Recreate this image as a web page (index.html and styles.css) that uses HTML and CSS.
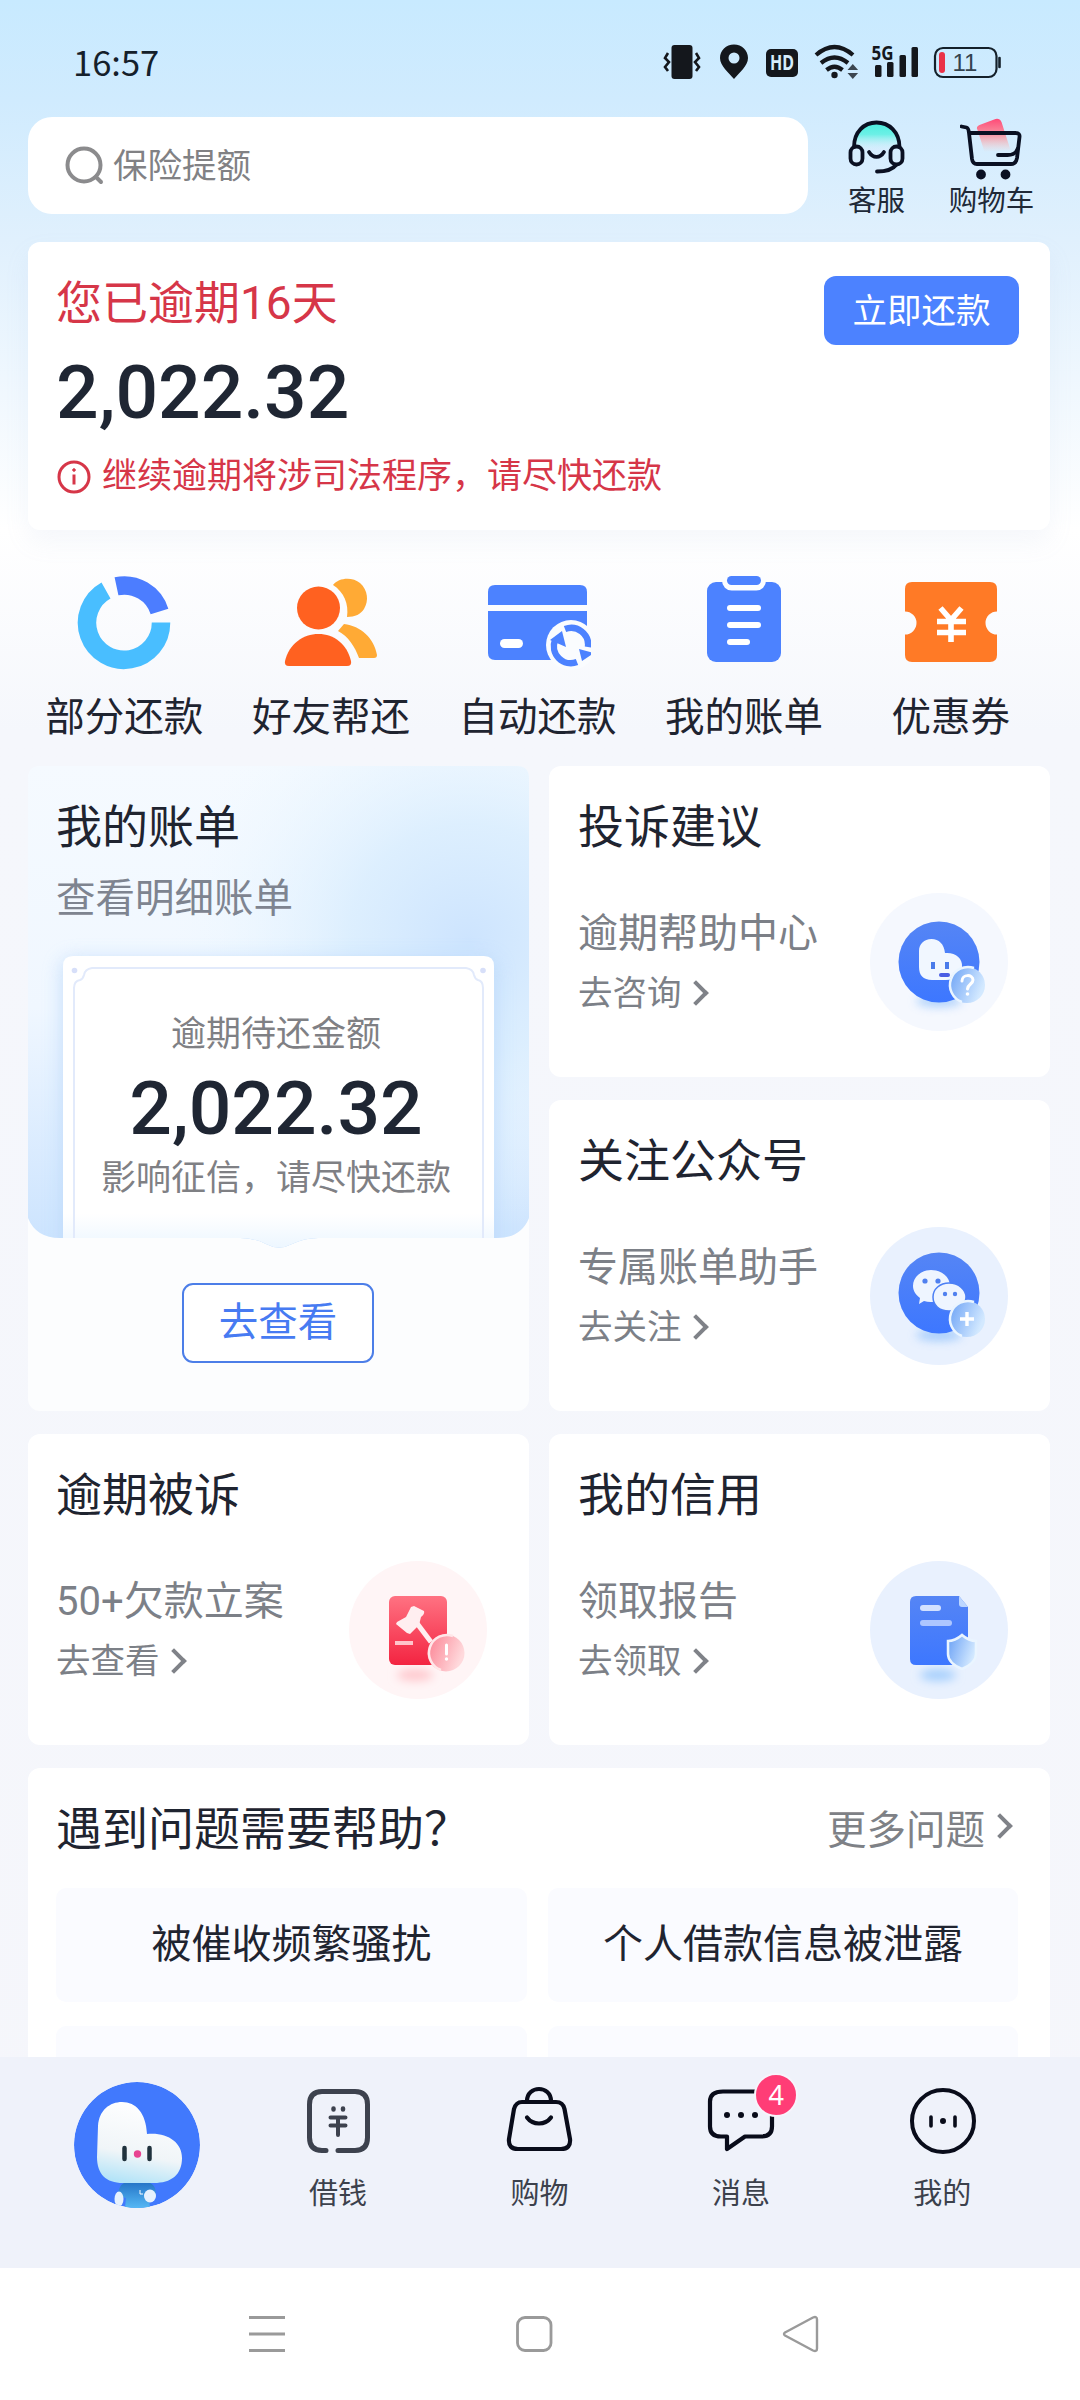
FILE: index.html
```html
<!DOCTYPE html>
<html lang="zh-CN">
<head>
<meta charset="utf-8">
<title>还款</title>
<link rel="stylesheet" href="styles.css">
</head>
<body>
<div class="screen">
  <header class="status">
    <span class="clock">16:57</span>
    <svg class="status-icons" width="342" height="48" viewBox="660 34 342 48">
      <rect x="671.500" y="45" width="21" height="34" rx="3" fill="#14171c"/>
      <path d="M668 53l-3 5 4 4-4 5 3 4M696 53l3 5-4 4 4 5-3 4" fill="none" stroke="#14171c" stroke-width="2.600"/>
      <path d="M734 44.500c-8 0-14 6-14 13.500 0 8 9 15 14 21 5-6 14-13 14-21 0-7.500-6-13.500-14-13.500z" fill="#14171c"/>
      <circle cx="734" cy="58" r="5.500" fill="#cdeafd"/>
      <rect x="766" y="49" width="32" height="28" rx="5" fill="#14171c"/>
      <text x="782" y="70" class="hd" textLength="24" lengthAdjust="spacingAndGlyphs">HD</text>
      <g fill="none" stroke="#14171c" stroke-width="4.200">
        <path d="M816 55q18.500-16 37 0"/><path d="M821 63q13.500-11 27 0"/><path d="M826.500 70q8-6.500 16 0"/>
      </g>
      <circle cx="834.500" cy="75" r="3.200" fill="#14171c"/>
      <path d="M847.500 70l5.300-6 5.300 6zM847.500 73l5.300 6 5.300-6z" fill="#3c4650"/>
      <text x="871.500" y="60" class="fiveg" textLength="22" lengthAdjust="spacingAndGlyphs">5G</text>
      <g fill="#14171c"><rect x="875" y="65" width="6.500" height="12" rx="1.500"/><rect x="887" y="62" width="6.500" height="15" rx="1.500"/><rect x="899.500" y="55" width="6.500" height="22" rx="1.500"/><rect x="911.500" y="47" width="6.500" height="30" rx="1.500"/></g>
      <rect x="935" y="48" width="61.500" height="29" rx="8" fill="none" stroke="#14202a" stroke-width="2.200"/>
      <rect x="939" y="52" width="6" height="21" rx="3" fill="#ea3147"/>
      <text x="965" y="71" class="pct">11</text>
      <path d="M999.500 58v9" stroke="#14202a" stroke-width="2.600" stroke-linecap="round"/>
    </svg>
  </header>

  <div class="topbar">
    <div class="search">
      <svg width="42" height="42" viewBox="0 0 42 42" fill="none" stroke="#8b8b8d" stroke-width="4" stroke-linecap="round"><circle cx="20" cy="20" r="16.500"/><path d="M32 32l5 5"/></svg>
      <span>保险提额</span>
    </div>
    <div class="top-action">
      <svg width="64" height="64" viewBox="845 116 64 64" fill="none" stroke="#0a1022" stroke-width="3.800" stroke-linecap="round">
        <defs><linearGradient id="mint" x1="0" y1="0" x2="0" y2="1"><stop offset="0" stop-color="#4eeedf"/><stop offset=".4" stop-color="#6cf0e6"/><stop offset="1" stop-color="#cff1fb" stop-opacity="0"/></linearGradient></defs>
        <path d="M854 146c0-15 10-23 22.500-23s23 8 23 23q-23 6-45.500 0z" fill="url(#mint)" stroke="none"/>
        <path d="M854 146c0-15 10-24.500 22.500-24.500s23 9.500 23 24.500"/>
        <rect x="850.500" y="145.500" width="12" height="18" rx="6"/><rect x="890.500" y="145.500" width="12" height="18" rx="6"/>
        <path d="M869 151c4 6.500 11 6.500 15 0M896 164c-3 4-9 6.500-19 6.500"/>
      </svg>
      <span>客服</span>
    </div>
    <div class="top-action">
      <svg width="64" height="64" viewBox="959.500 116 64 64" fill="none" stroke="#0a1022" stroke-width="3.800" stroke-linecap="round" stroke-linejoin="round">
        <defs><linearGradient id="rose" x1="0" y1="0" x2="0" y2="1"><stop offset="0" stop-color="#ff4a77"/><stop offset=".45" stop-color="#f78f9f"/><stop offset="1" stop-color="#ffc4b8" stop-opacity="0"/></linearGradient></defs>
        <path d="M977 129q-2-3 2-5l16-6q4-1 6 3l9 28-26 2z" fill="url(#rose)" stroke="none"/>
        <path d="M961 125.500l5 1q2 .5 2.500 5.500l3 26q.7 5 5 5h34q5 0 6-6l2.500-21q.6-4-4-4H970"/>
        <path d="M1017 148q-2 6-10 6h-9.500"/>
        <circle cx="980.500" cy="173.500" r="3" fill="#0a1022"/><circle cx="1005" cy="173.500" r="3" fill="#0a1022"/>
      </svg>
      <span>购物车</span>
    </div>
  </div>

  <section class="due card">
    <div class="due-text">
      <h1>您已逾期16天</h1>
      <strong class="amount">2,022.32</strong>
      <p><svg width="36" height="36" viewBox="0 0 36 36" fill="none" stroke="#d63648"><circle cx="18" cy="18" r="15" stroke-width="3"/><path d="M18 15.500v10" stroke-width="3"/><circle cx="18" cy="11" r="1.300" fill="#d63648" stroke-width="1"/></svg>继续逾期将涉司法程序，请尽快还款</p>
    </div>
    <button class="pay">立即还款</button>
  </section>

  <nav class="shortcuts">
    <a><svg viewBox="0 0 108 96"><g fill="none" stroke-width="18.500"><path d="M91 48.500A37 37 0 1 1 36 16.500" stroke="#49beff"/><path d="M46.500 12.300A37 37 0 0 1 89.500 37.500" stroke="#4c7dff"/></g></svg>部分还款</a>
    <a><svg viewBox="0 0 108 96"><g fill="#ffaa35"><path d="M56 11c6-8 20-8 27-2 8 7 9 18 4 26-3 5-9 8-17 8 2-13-3-25-14-32z"/><path d="M61 57l6-7c17 2 30 14 33 31q0 3-3 3H82C78 73 71 62 61 57z"/></g><circle cx="41.500" cy="34" r="21.500" fill="#ff6120"/><path d="M8 87c4-17 18-27 33.500-27S70 70 74 87q1 5-4 5H12q-5 0-4-5z" fill="#ff6120"/></svg>好友帮还</a>
    <a><svg viewBox="0 0 108 96"><path d="M5 18q0-7 7-7h85q7 0 7 7v13H5zM5 37h99v47q0 2-7 2H12q-7 0-7-7z" fill="#4c82ff"/><rect x="17" y="65" width="23" height="9" rx="4.500" fill="#fff"/><circle cx="88" cy="71" r="25" fill="#fafcfe"/><g fill="none" stroke="#4c82ff" stroke-width="6.500"><path d="M82 55a17 17 0 0 1 23 18"/><path d="M94 88A17 17 0 0 1 72 66"/></g><path d="M67 66l12-9 4 16zM96 75l15 4-12 8z" fill="#4c82ff"/></svg>自动还款</a>
    <a><svg viewBox="0 0 108 96"><rect x="17" y="8" width="74" height="80" rx="9" fill="#4c82ff"/><rect x="32" y="-3" width="44" height="19.500" rx="9.700" fill="#fcfdff"/><rect x="37" y="2" width="34" height="9" rx="4.500" fill="#4c82ff"/><g fill="#fff"><rect x="37" y="31" width="34" height="6" rx="3"/><rect x="37" y="48" width="34" height="6" rx="3"/><rect x="37" y="65" width="23" height="6" rx="3"/></g></svg>我的账单</a>
    <a><svg viewBox="0 0 108 96"><path d="M15 8h78q7 0 7 7v22.500a11.500 11.500 0 0 0 0 23V81q0 7-7 7H15q-7 0-7-7V60.500a11.500 11.500 0 0 0 0-23V15q0-7 7-7z" fill="#ff7a26"/><path d="M43.500 34l10.500 12 10.500-12M40 47.500h29M40 58.500h29M54 46v22" fill="none" stroke="#fff" stroke-width="5.600"/></svg>优惠券</a>
  </nav>

  <main class="grid">
    <section class="bill card">
      <svg class="bill-art" width="501" height="483" viewBox="0 0 501 483">
        <defs>
          <linearGradient id="sky" x1="0" y1="0" x2="0" y2="1"><stop offset="0" stop-color="#f5faff"/><stop offset=".5" stop-color="#f0f7ff"/><stop offset="1" stop-color="#cbe3fe"/></linearGradient>
          <radialGradient id="glow" cx=".88" cy=".36" r=".6" gradientTransform="translate(0 0)"><stop offset="0" stop-color="#cde4fe"/><stop offset=".4" stop-color="#d9edfe" stop-opacity=".85"/><stop offset="1" stop-color="#eff9ff" stop-opacity="0"/></radialGradient>
          <linearGradient id="fade" x1="0" y1="0" x2="0" y2="1"><stop offset="0" stop-color="#fff"/><stop offset=".88" stop-color="#fff"/><stop offset="1" stop-color="#ecf6ff"/></linearGradient>
          <filter id="soft" x="-20%" y="-20%" width="140%" height="140%"><feGaussianBlur stdDeviation="9"/></filter>
          <clipPath id="pane"><path d="M0 12Q0 0 12 0h477q12 0 12 12v440q-8 20-32 20H290q-14 0-26 6-13 7-26 0-12-6-26-6H32Q8 472 0 452z"/></clipPath>
        </defs>
        <g clip-path="url(#pane)">
          <rect width="501" height="483" fill="url(#sky)"/><rect width="501" height="483" fill="url(#glow)"/>
          <rect x="33" y="192" width="436" height="310" rx="12" fill="#b9d8fa" opacity=".7" filter="url(#soft)"/>
          <path d="M35 200q0-10 10-10h411q10 0 10 10v283H35z" fill="url(#fade)"/>
          <path d="M46 472V222q0-7 6-8 3-1 4-5 1-6 8-7h374q7 1 8 7 1 4 4 5 5 1 5 8v250" fill="none" stroke="#e2eafb" stroke-width="2"/>
          <circle cx="46.500" cy="204.500" r="2.800" fill="#d7dff9"/><circle cx="455" cy="204.500" r="2.800" fill="#d7dff9"/>
        </g>
      </svg>
      <div class="bill-body">
        <h2>我的账单</h2>
        <p class="sub">查看明细账单</p>
        <p class="small">逾期待还金额</p>
        <strong class="amount">2,022.32</strong>
        <p class="small note">影响征信，请尽快还款</p>
        <button class="view">去查看</button>
      </div>
    </section>

    <section class="tile card">
      <h2>投诉建议</h2>
      <div class="tile-row">
        <div><p>逾期帮助中心</p><a>去咨询<i class="chev"></i></a></div>
        <svg class="orb" viewBox="0 0 138 138">
          <defs>
            <linearGradient id="blue" x1="0" y1="0" x2="0" y2="1"><stop offset="0" stop-color="#5585f5"/><stop offset="1" stop-color="#3d77ff"/></linearGradient>
            <linearGradient id="ball" x1="0" y1="0" x2="1" y2=".4"><stop offset="0" stop-color="#69a0f5"/><stop offset="1" stop-color="#d3e9ff"/></linearGradient>
            <filter id="blur" x="-50%" y="-80%" width="200%" height="260%"><feGaussianBlur stdDeviation="5"/></filter>
          </defs>
          <circle cx="69" cy="69" r="69" fill="#f5f8fe"/><ellipse cx="69" cy="108" rx="23" ry="6" fill="#9cc7fb" opacity=".8" filter="url(#blur)"/>
          <circle cx="69" cy="69" r="40.500" fill="url(#blue)"/>
          <path d="M49 58c0-7 5-12 12.500-12S74 51 75 60c10-1 18 5 17 14-1 8-7 13-16 13H62c-9 0-13-5-13-13z" fill="#f1f7ff"/>
          <path d="M63 69v7M77 69v7" stroke="#4a7bea" stroke-width="4"/><path d="M71 82h7" stroke="#4a5de4" stroke-width="4" stroke-linecap="round"/>
          <circle cx="97" cy="92" r="18" fill="url(#ball)"/><path d="M92 109A18 18 0 1 1 104 75" fill="none" stroke="#eaf5ff" stroke-width="2.500"/>
          <path d="M92 88c0-7 11-7 11-1 0 4-5 4-5.500 9" fill="none" stroke="#fff" stroke-width="3" stroke-linecap="round"/><circle cx="97.500" cy="101" r="1.800" fill="#fff"/>
        </svg>
      </div>
    </section>

    <section class="tile card">
      <h2>关注公众号</h2>
      <div class="tile-row">
        <div><p>专属账单助手</p><a>去关注<i class="chev"></i></a></div>
        <svg class="orb" viewBox="0 0 138 138">
          <circle cx="69" cy="69" r="69" fill="#e9f1fe"/><ellipse cx="69" cy="108" rx="23" ry="6" fill="#96c4fb" opacity=".8" filter="url(#blur)"/>
          <circle cx="69" cy="66" r="40.500" fill="url(#blue)"/>
          <path d="M61 43c11 0 19 7 19 16s-8 16-19 16q-4 0-7-1l-5 3 1-6c-4-3-7-7-7-12 0-9 8-16 18-16z" fill="#eef5ff"/>
          <path d="M79 56c10 0 17 7 17 14s-7 14-17 14-16-6-16-14 7-14 16-14z" fill="#eef5ff" stroke="#4b7ff5" stroke-width="1.500"/>
          <g fill="#4f80ef"><circle cx="55" cy="54" r="2.600"/><circle cx="68" cy="54" r="2.600"/><circle cx="75" cy="67" r="2.200"/><circle cx="85" cy="67" r="2.200"/></g>
          <circle cx="97" cy="92" r="18" fill="url(#ball)"/><path d="M92 109A18 18 0 1 1 104 75" fill="none" stroke="#eaf5ff" stroke-width="2.500"/>
          <path d="M90 92h14M97 85v14" stroke="#fff" stroke-width="3.400"/>
        </svg>
      </div>
    </section>

    <section class="tile card">
      <h2>逾期被诉</h2>
      <div class="tile-row">
        <div><p>50+欠款立案</p><a>去查看<i class="chev"></i></a></div>
        <svg class="orb" viewBox="0 0 138 138">
          <defs><linearGradient id="red" x1="0" y1="0" x2="0" y2="1"><stop offset="0" stop-color="#ff7282"/><stop offset="1" stop-color="#f32441"/></linearGradient><linearGradient id="pink" x1="0" y1="0" x2="1" y2=".4"><stop offset="0" stop-color="#fb7f90"/><stop offset="1" stop-color="#ffd9dc"/></linearGradient></defs>
          <circle cx="69" cy="69" r="69" fill="#fff5f6"/><ellipse cx="66" cy="114" rx="18" ry="6" fill="#ffc8cd" filter="url(#blur)"/>
          <rect x="40" y="35" width="58" height="69" rx="6" fill="url(#red)"/>
          <path d="M65 45l10 5q1 3-3 6l-2 8-9 9-3-1-11-9 1-2 9-5 5-10z" fill="#ffeef0"/><path d="M67 61l15 20" stroke="#ffeef0" stroke-width="5"/><path d="M46 82h18" stroke="#ffc4cb" stroke-width="4"/>
          <circle cx="97" cy="92" r="18.500" fill="url(#pink)"/><path d="M92 109A18 18 0 1 1 104 75" fill="none" stroke="#ffe7e9" stroke-width="2.500"/>
          <path d="M97.500 84v9" stroke="#fff" stroke-width="3" stroke-linecap="round"/><circle cx="97.500" cy="98" r="1.700" fill="#fff"/>
        </svg>
      </div>
    </section>

    <section class="tile card">
      <h2>我的信用</h2>
      <div class="tile-row">
        <div><p>领取报告</p><a>去领取<i class="chev"></i></a></div>
        <svg class="orb" viewBox="0 0 138 138">
          <circle cx="69" cy="69" r="69" fill="#e9f1fe"/><ellipse cx="68" cy="114" rx="18" ry="6" fill="#a5cffd" filter="url(#blur)"/>
          <path d="M46 35h43l9 11v52q0 6-6 6H46q-6 0-6-6V41q0-6 6-6z" fill="url(#blue)"/><path d="M89 35l9 11h-6q-3 0-3-3z" fill="#bdd7ff"/>
          <g stroke-linecap="round" stroke-width="6"><path d="M53 47h15" stroke="#d2e1ff"/><path d="M53 62h26" stroke="#adc6ff"/></g>
          <path d="M92 73q7 6 14 6v13q0 9-14 15-14-6-14-15V79q7 0 14-6z" transform="translate(0 1)" fill="url(#ball)" stroke="#eaf5ff" stroke-width="2.500"/>
        </svg>
      </div>
    </section>
  </main>

  <section class="help card">
    <div class="help-head"><h2>遇到问题需要帮助？</h2><a>更多问题<i class="chev"></i></a></div>
    <div class="questions"><span>被催收频繁骚扰</span><span>个人借款信息被泄露</span><span></span><span></span></div>
  </section>

  <nav class="tabs">
    <a class="home"><svg width="126" height="126" viewBox="0 0 126 126">
      <defs><clipPath id="disc"><circle cx="63" cy="63" r="63"/></clipPath><linearGradient id="head" x1=".6" y1="0" x2=".4" y2="1"><stop offset="0" stop-color="#fff"/><stop offset=".65" stop-color="#f0f5f8"/><stop offset="1" stop-color="#b4e4f8"/></linearGradient><linearGradient id="shirt" x1="0" y1="0" x2="0" y2="1"><stop offset="0" stop-color="#2676c8"/><stop offset="1" stop-color="#55b8f4"/></linearGradient></defs>
      <g clip-path="url(#disc)"><circle cx="63" cy="63" r="63" fill="#4179fd"/>
      <path d="M50 101h26c5 2 7 8 5 14l-6 1 1 10H51l1-10-8-2c0-6 2-11 6-13z" fill="url(#shirt)"/><ellipse cx="45" cy="117" rx="4.500" ry="7.500" fill="#e6f1fd"/><ellipse cx="76" cy="114" rx="6" ry="6.500" fill="#e6f1fd"/><path d="M66 108v4h3" fill="none" stroke="#fff" stroke-width="1"/>
      <path d="M24 44c1-16 12-24 24-24 14 0 24 11 25 32 20-2 35 8 35 24 0 17-11 25-28 25H49c-17 0-26-9-26-26z" fill="url(#head)"/></g>
      <path d="M50.500 66v11M75.500 66v11" stroke="#20323d" stroke-width="4.500" stroke-linecap="round"/><circle cx="63.500" cy="72" r="3.700" fill="#e84391"/>
    </svg></a>
    <a><svg viewBox="305 2083 66 74" fill="none" stroke="#3d424e" stroke-width="5" stroke-linecap="round"><path d="M326 2150.500h-4q-12.500 0-12.500-13v-33q0-13 12.500-13h33q12.500 0 12.500 13v33q0 13-12.500 13H338"/><path d="M330.500 2117.500h15M330.500 2125.500h15M338 2118v17" stroke-width="4"/><path d="M333.500 2108.500v1M343 2108.500v1" stroke-width="4.500"/></svg>借钱</a>
    <a><svg viewBox="505 2083 70 74" fill="none" stroke="#090c1a" stroke-width="4.200" stroke-linecap="round"><path d="M522 2102h34q7 0 8.500 7l5.500 30q1 10-9 10h-43q-10 0-9-10l5-30q2-7 8-7z"/><path d="M527 2101c0-16 24-16 24 0M527 2117.500c6 8 18 8 24 0"/></svg>购物</a>
    <a><svg viewBox="705 2083 72 74" fill="none" stroke="#090c1a" stroke-width="4.200" stroke-linejoin="round"><path d="M723 2091.500h36q13 0 13 13v22q0 10-11 10h-16l-18 12.500v-12.500h-6q-11 0-11-10v-25q0-10 13-10z"/><g fill="#090c1a" stroke="none"><circle cx="727" cy="2115" r="3"/><circle cx="741" cy="2115" r="3"/><circle cx="755" cy="2115" r="3"/></g></svg><b class="badge">4</b>消息</a>
    <a><svg viewBox="906 2083 72 74" fill="none" stroke="#090c1a" stroke-width="4" stroke-linecap="round"><circle cx="943" cy="2121" r="31"/><path d="M931 2117v9M955 2117v9" stroke-width="3.600"/><circle cx="943" cy="2121" r="2" fill="#090c1a" stroke-width="2"/></svg>我的</a>
  </nav>

  <footer class="system-nav">
    <svg width="40" height="40" viewBox="0 0 40 40" fill="none" stroke="#9a9a9a" stroke-width="3"><path d="M2 3.500h36M2 20h36M2 36.500h36"/></svg>
    <svg width="40" height="40" viewBox="-.5 0 40 40" fill="none" stroke="#9a9a9a" stroke-width="2.800"><rect x="3" y="3.500" width="33.500" height="33" rx="7.500"/></svg>
    <svg width="40" height="40" viewBox="0 0 40 40" fill="none" stroke="#9a9a9a" stroke-width="2.400" stroke-linejoin="round"><path d="M4 18.500L32 3.500q4-1.500 4 2v29q0 3.500-4 2L4 21.500q-2-1.500 0-3z"/></svg>
  </footer>
</div>
</body>
</html>
```
FILE: styles.css
```css
* { box-sizing: border-box; margin: 0; padding: 0; }
body { background: #f5f6fb; font-family: Roboto, "Noto Sans CJK SC", sans-serif; color: #1f2430; }
h1, h2 { font-size: 46px; line-height: 60px; font-weight: 400; }
svg { display: block; flex: none; }
button { font: inherit; display: block; }
.screen { width: 1080px; height: 2400px; overflow: hidden; display: flex; flex-direction: column; background: linear-gradient(#c8eaff 0, #d0ebfe 100px, #e0f0fd 240px, #fff 530px, #f5f7fc 730px, #f5f6fb 100%); }
.card { background: #fff; border-radius: 12px; }

.status { height: 117px; flex: none; display: flex; justify-content: space-between; padding: 34px 78px 0 73px; }
.clock { font: 34.500px/42px "Noto Sans CJK SC", sans-serif; color: #15202a; padding-top: 6px; }
.status-icons text { font-family: "Noto Sans", sans-serif; }
.status-icons .hd { font-size: 21px; font-weight: 700; fill: #d6edfb; text-anchor: middle; }
.status-icons .fiveg { font-size: 20px; font-weight: 700; fill: #14171c; }
.status-icons .pct { font: 24px "Liberation Sans", sans-serif; fill: #33424e; text-anchor: middle; }

.topbar { height: 125px; flex: none; display: flex; padding-left: 28px; }
.search { width: 780px; height: 97px; border-radius: 24px; background: #fff; display: flex; align-items: center; gap: 7px; padding: 0 0 6px 36px; color: #818184; font-size: 34.5px; }
.search svg { margin-top: 7px; }
.top-action { width: 115px; display: flex; flex-direction: column; align-items: center; font-size: 28.5px; line-height: 41px; color: #202938; white-space: nowrap; }
.top-action:nth-child(2) { margin-left: 11px; }

.due { flex: none; height: 288px; margin: 0 30px 0 28px; padding: 28px 31px 0 28px; display: flex; justify-content: space-between; box-shadow: 0 12px 24px rgba(160, 180, 220, .1); }
.due h1 { line-height: 66px; color: #d63648; }
.amount { display: block; font: 500 75px/88px Roboto, sans-serif; color: #1f2633; }
.due .amount { margin-top: 12px; }
.due p { display: flex; align-items: center; gap: 10px; margin-top: 17px; font-size: 35px; line-height: 48px; color: #d63648; }
.pay { width: 195px; height: 69px; margin-top: 6px; border: 0; border-radius: 12px; background: #4c82ff; color: #fff; font-size: 34.5px; line-height: 64px; }

.shortcuts { flex: none; height: 236px; display: flex; padding: 44px 26px 0 21px; }
.shortcuts a { flex: 1; display: flex; flex-direction: column; align-items: center; font-size: 39.5px; line-height: 58px; gap: 19px; color: #1f2430; }
.shortcuts svg { width: 108px; height: 96px; }

.grid { flex: none; display: grid; grid-template-columns: 501px 501px; grid-template-rows: repeat(3, 311px); gap: 23px 20px; margin: 0 30px 0 28px; }
.bill { grid-row: span 2; position: relative; background: #fcfdfe; }
.bill-art { position: absolute; left: 0; top: 0; }
.bill-body { position: relative; padding: 31px 0 0 28px; }
.sub { font-size: 39.500px; line-height: 56px; margin-top: 14px; color: #7e8490; }
.small { font-size: 35px; line-height: 50px; margin-top: 83px; color: #7f8084; text-align: center; padding-right: 33px; }
.bill .amount { text-align: center; padding-right: 33px; margin-top: 4px; }
.note { margin-top: 2px; }
.view { width: 192px; height: 80px; border: 2px solid #4c7ee8; border-radius: 11px; margin: 79px 0 0 126px; background: #fff; color: #477bf2; font-size: 39.500px; line-height: 74px; }

.tile { padding: 31px 42px 0 29px; }
.tile-row { display: flex; justify-content: space-between; margin-top: 35px; }
.tile p { font-size: 40px; line-height: 58px; margin-top: 13px; color: #7c8087; white-space: nowrap; }
.tile a { display: flex; align-items: center; gap: 9px; font-size: 34.500px; line-height: 50px; margin-top: 5px; color: #7c8087; }
.orb { width: 138px; height: 138px; margin-top: 1px; }
.bill ~ .tile:nth-child(4) { padding-left: 28px; }
.chev { width: 18px; height: 18px; border: solid #7f8288; border-width: 4px 4px 0 0; transform: translateX(-4px) rotate(45deg); }

.help { flex: 1; min-height: 0; margin: 23px 30px 0 28px; padding: 31px 31px 0 28px; overflow: hidden; border-radius: 12px 12px 0 0; }
.help-head { display: flex; justify-content: space-between; align-items: center; height: 60px; }
.help-head a { display: flex; align-items: center; gap: 10px; font-size: 39.500px; color: #7e8186; padding: 0 6px 6px 0; }
.questions { display: grid; grid-template-columns: 471px 470px; grid-auto-rows: 114px; gap: 24px 21px; margin-top: 29px; }
.questions span { border-radius: 10px; background: #fafbff; text-align: center; font-size: 40px; line-height: 114px; }

.tabs { flex: none; height: 211px; background: #eff2fa; display: flex; padding: 25px 37px 0 36px; }
.tabs a { flex: 1; position: relative; display: flex; flex-direction: column; align-items: center; font-size: 29px; line-height: 40px; color: #3c414c; }
.tabs a:not(.home) svg { height: 74px; margin: 1px 0 17px; }
.badge { position: absolute; left: 114px; top: -9px; width: 44px; height: 44px; border: 2px solid #f7f4fb; border-radius: 50%; background: #ff3d76; color: #fff; font: 27px/40px "Noto Sans", sans-serif; text-align: center; }

.system-nav { flex: none; height: 132px; background: #fff; display: flex; justify-content: space-between; align-items: center; padding: 0 259px 0 247px; }
```
